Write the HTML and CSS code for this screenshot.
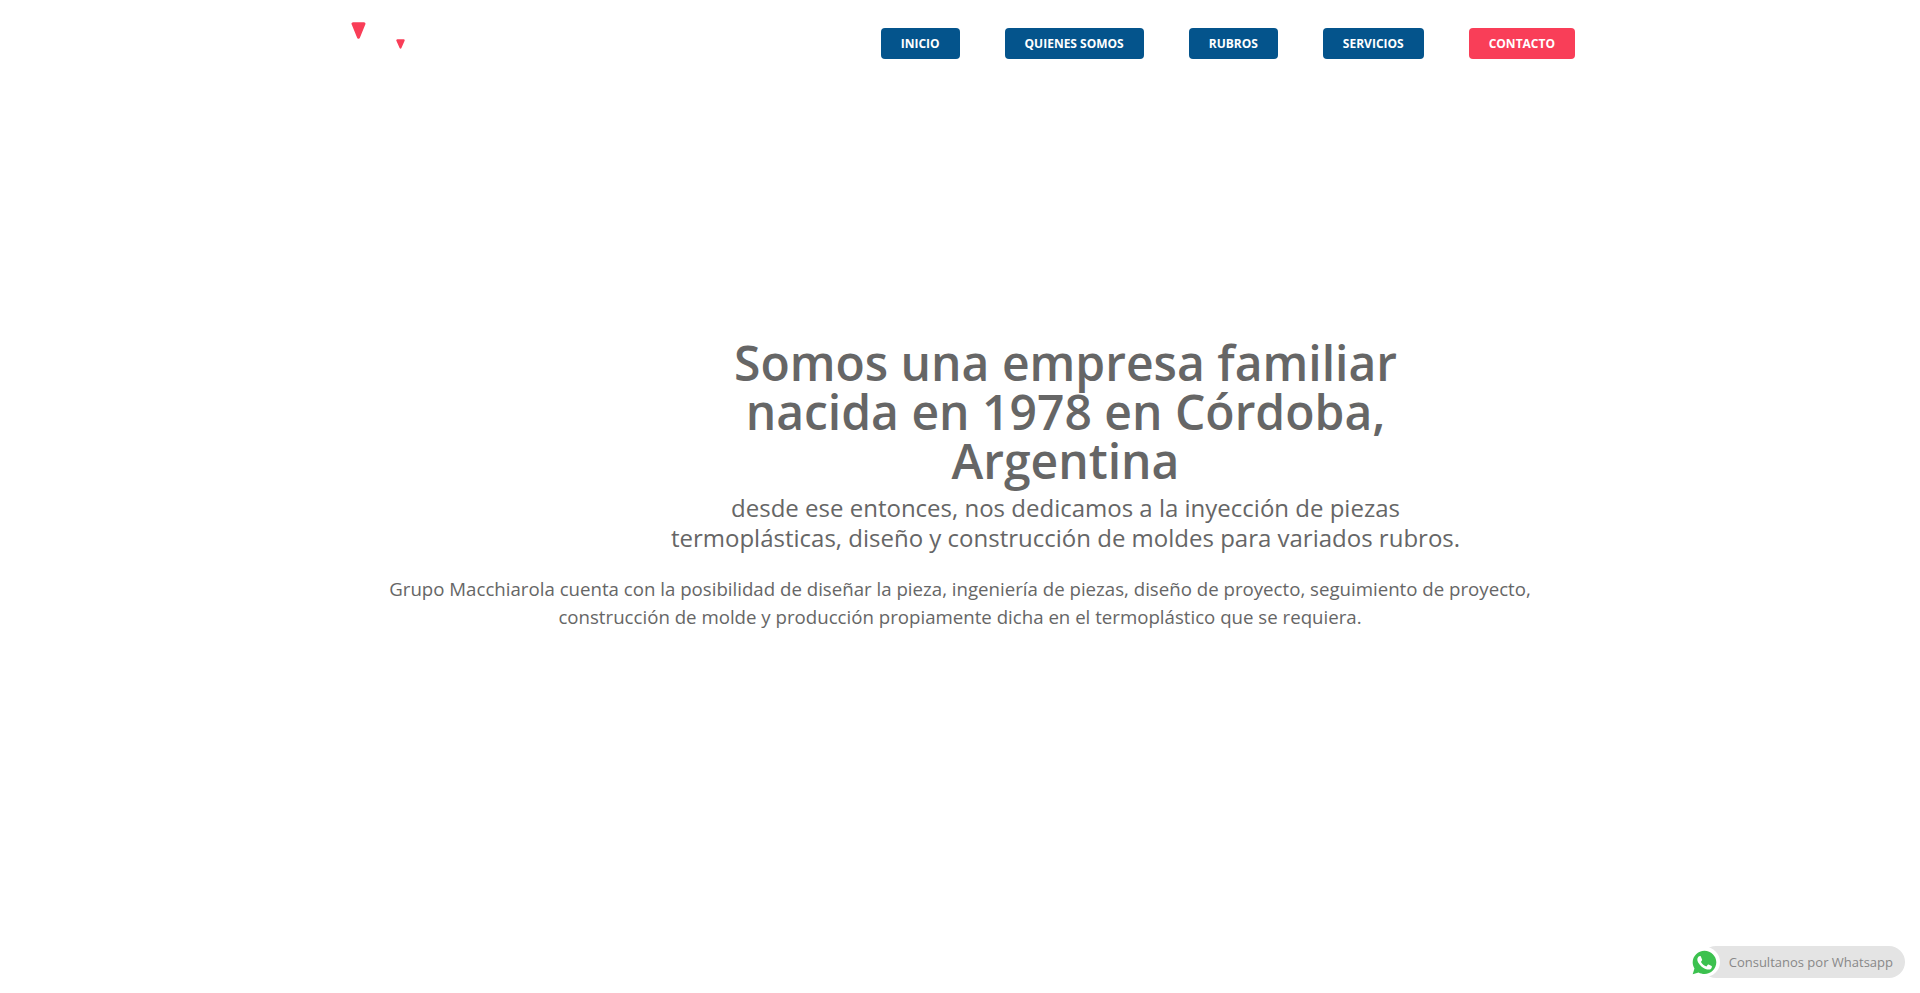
FILE: index.html
```html
<!DOCTYPE html>
<html>
<head>
    <link rel="stylesheet" href="styles.css">
</head>
<body>
    <header class="top-bar">
        <div class="logo">
            <svg class="logo-big" viewBox="0 0 15 17"><path d="M2 1.800h11L7.500 15.300z" fill="#f93e58" stroke="#f93e58" stroke-width="3" stroke-linejoin="round"/></svg>
            <svg class="logo-small" viewBox="0 0 9 10"><path d="M1.300 1.300h6.400L4.500 8.700z" fill="#f93e58" stroke="#f93e58" stroke-width="2" stroke-linejoin="round"/></svg>
        </div>
        <nav class="menu">
            <a class="menu-btn" href="#">INICIO</a>
            <a class="menu-btn" href="#">QUIENES SOMOS</a>
            <a class="menu-btn" href="#">RUBROS</a>
            <a class="menu-btn" href="#">SERVICIOS</a>
            <a class="menu-btn contact" href="#">CONTACTO</a>
        </nav>
    </header>

    <section class="intro">
        <div class="intro-head">
            <h1>Somos una empresa familiar nacida en 1978 en Córdoba, Argentina</h1>
            <h2>desde ese entonces, nos dedicamos a la inyección de piezas termoplásticas, diseño y construcción de moldes para variados rubros.</h2>
        </div>
        <p>Grupo Macchiarola cuenta con la posibilidad de diseñar la pieza, ingeniería de piezas, diseño de proyecto, seguimiento de proyecto, construcción de molde y producción propiamente dicha en el termoplástico que se requiera.</p>
    </section>

    <a class="whatsapp" href="#">
        <span class="wa-icon">
            <svg viewBox="0 0 32 32" width="27" height="27"><path d="M16 2C8.300 2 2 8.200 2 15.800c0 2.700.8 5.200 2.100 7.300L2 30l7-2.200c2 1.100 4.500 1.800 7 1.800 7.700 0 14-6.200 14-13.800S23.700 2 16 2z" fill="#3cc14f"/><path d="M11.600 9.200c-.4 0-1 .2-1.500.8-.6.700-1.600 1.700-1.600 3.700s1.500 4 1.700 4.200c.2.300 3 4.700 7.300 6.400 3.600 1.400 4.300 1.100 5.100 1.100.8-.1 2.500-1 2.800-2 .4-1 .4-1.800.3-2-.1-.2-.4-.3-.8-.5l-3-1.400c-.4-.2-.7-.2-1 .2-.3.4-1.100 1.400-1.400 1.700-.2.300-.5.300-.9.100-.4-.2-1.800-.7-3.400-2.100-1.200-1.100-2.100-2.400-2.300-2.900-.2-.4 0-.6.200-.8l.7-.8c.2-.3.300-.5.400-.8.100-.3 0-.6-.1-.8l-1.300-3.200c-.4-.8-.7-.8-1-.8z" fill="#fff" transform="translate(-1 -1)"/></svg>
        </span>
        <span class="wa-text">Consultanos por Whatsapp</span>
    </a>
</body>
</html>
```

FILE: styles.css
```css
body {
    font-family: "Open Sans", sans-serif;
    background-color: #fff;
    color: #666;
    margin: 0;
    min-height: 993px;
    overflow: hidden;
}
.top-bar {
    display: flex;
    justify-content: space-between;
    align-items: flex-start;
    width: 1224px;
    margin: 0 auto;
    padding: 0 345px 0 351px;
}
.logo {
    display: flex;
    width: 60px;
    padding-top: 22px;
}
.logo svg {
    display: block;
}
.logo-big {
    width: 15px;
    height: 17px;
}
.logo-small {
    width: 9px;
    height: 10px;
    margin: 17px 0 0 30px;
}
.menu {
    display: flex;
    gap: 45px;
    padding-top: 28px;
}
.menu-btn {
    display: block;
    background: #04548c;
    color: #fff;
    font-size: 12px;
    font-weight: 700;
    line-height: 31px;
    padding: 0 20px;
    border-radius: 4px;
    text-decoration: none;
}
.menu-btn.contact {
    background: #f93e58;
}
.intro {
    display: flex;
    flex-direction: column;
    align-items: center;
    margin-top: 279px;
    text-align: center;
}
.intro-head {
    width: 810px;
    margin-left: 211px;
}
h1 {
    font-size: 48px;
    font-weight: 600;
    line-height: 49px;
    margin: 0 auto;
    width: 700px;
}
h2 {
    font-size: 24px;
    font-weight: 400;
    line-height: 30px;
    margin: 8px 0 0;
}
p {
    font-size: 18.660px;
    line-height: 28px;
    width: 1160px;
    margin: 22px 0 0;
}
.whatsapp {
    position: fixed;
    right: 15px;
    bottom: 15px;
    display: flex;
    align-items: center;
    height: 32px;
    padding-right: 12px;
    background: #e4e4e4;
    border-radius: 16px;
    color: #888;
    font-size: 13px;
    text-decoration: none;
}
.wa-icon {
    display: flex;
    align-items: center;
    justify-content: center;
    width: 30px;
    height: 30px;
    margin: 0 9px 0 -10px;
    background: #fff;
    border-radius: 50%;
}
```
